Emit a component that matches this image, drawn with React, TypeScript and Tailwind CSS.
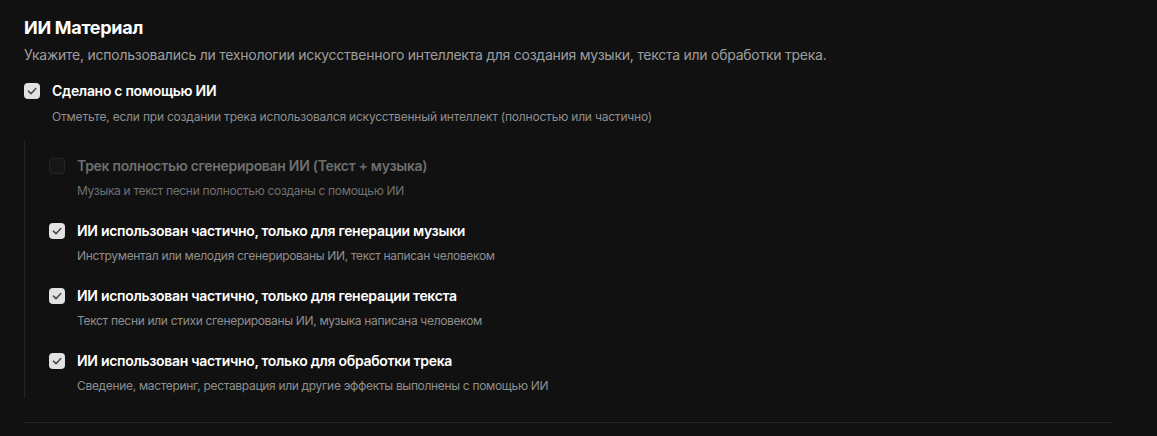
import React from "react";

type Item = { label: string; desc: string; checked: boolean; disabled?: boolean };

const items: Item[] = [
  {
    label: "Трек полностью сгенерирован ИИ (Текст + музыка)",
    desc: "Музыка и текст песни полностью созданы с помощью ИИ",
    checked: false,
    disabled: true,
  },
  {
    label: "ИИ использован частично, только для генерации музыки",
    desc: "Инструментал или мелодия сгенерированы ИИ, текст написан человеком",
    checked: true,
  },
  {
    label: "ИИ использован частично, только для генерации текста",
    desc: "Текст песни или стихи сгенерированы ИИ, музыка написана человеком",
    checked: true,
  },
  {
    label: "ИИ использован частично, только для обработки трека",
    desc: "Сведение, мастеринг, реставрация или другие эффекты выполнены с помощью ИИ",
    checked: true,
  },
];

function Box({ checked, disabled }: { checked: boolean; disabled?: boolean }) {
  if (checked) {
    return (
      <span className="flex h-4 w-4 shrink-0 items-center justify-center rounded-[4px] bg-[#e2e2e2]">
        <svg width="12" height="12" viewBox="0 0 12 12" fill="none">
          <path d="M2.4 6.2 L5 8.7 L9.8 3.5" stroke="#4e4e4e" strokeWidth="1.6" strokeLinecap="round" strokeLinejoin="round" />
        </svg>
      </span>
    );
  }
  return (
    <span
      className={
        disabled
          ? "block h-4 w-4 shrink-0 rounded-[4px] border border-[#262626] bg-[#161616]"
          : "block h-4 w-4 shrink-0 rounded-[4px] border border-[#555]"
      }
    />
  );
}

function Row({ item, descClass }: { item: Item; descClass: string }) {
  return (
    <div className="flex flex-col">
      <div className="flex items-center gap-3">
        <Box checked={item.checked} disabled={item.disabled} />
        <span
          className={
            item.disabled
              ? "text-[14px] font-semibold leading-5 tracking-[-0.3px] text-[#6e6e6e]"
              : "text-[14px] font-semibold leading-5 tracking-[-0.3px] text-white"
          }
        >
          {item.label}
        </span>
      </div>
      <div
        className={
          (item.disabled ? "text-[#707070] " : "text-[#8e8e8e] ") +
          descClass +
          " pl-7 text-[12px] leading-4"
        }
      >
        {item.desc}
      </div>
    </div>
  );
}

export default function App() {
  return (
    <div
      className="min-h-[436px] w-full bg-[#111111] px-6 pt-3.5"
      style={{ fontFamily: "Inter, 'Noto Sans', sans-serif" }}
    >
      <h2 className="text-[18px] font-bold leading-7 tracking-[-0.3px] text-white">ИИ Материал</h2>
      <p className="mt-[3px] text-[14px] leading-5 tracking-[-0.25px] text-[#9e9e9e]">
        Укажите, использовались ли технологии искусственного интеллекта для создания музыки, текста или обработки трека.
      </p>
      <div className="mt-4">
        <Row
          item={{
            label: "Сделано с помощью ИИ",
            desc: "Отметьте, если при создании трека использовался искусственный интеллект (полностью или частично)",
            checked: true,
          }}
          descClass="mt-2 tracking-[-0.2px]"
        />
      </div>
      <div className="mt-4 flex flex-col gap-[22px] border-l border-[#242424] pb-1 pl-6 pt-[15px]">
        {items.map((it) => (
          <Row key={it.label} item={it} descClass="mt-[7px] tracking-[-0.32px]" />
        ))}
      </div>
      <div className="mr-5 mt-6 h-px bg-[#262626]" />
    </div>
  );
}
